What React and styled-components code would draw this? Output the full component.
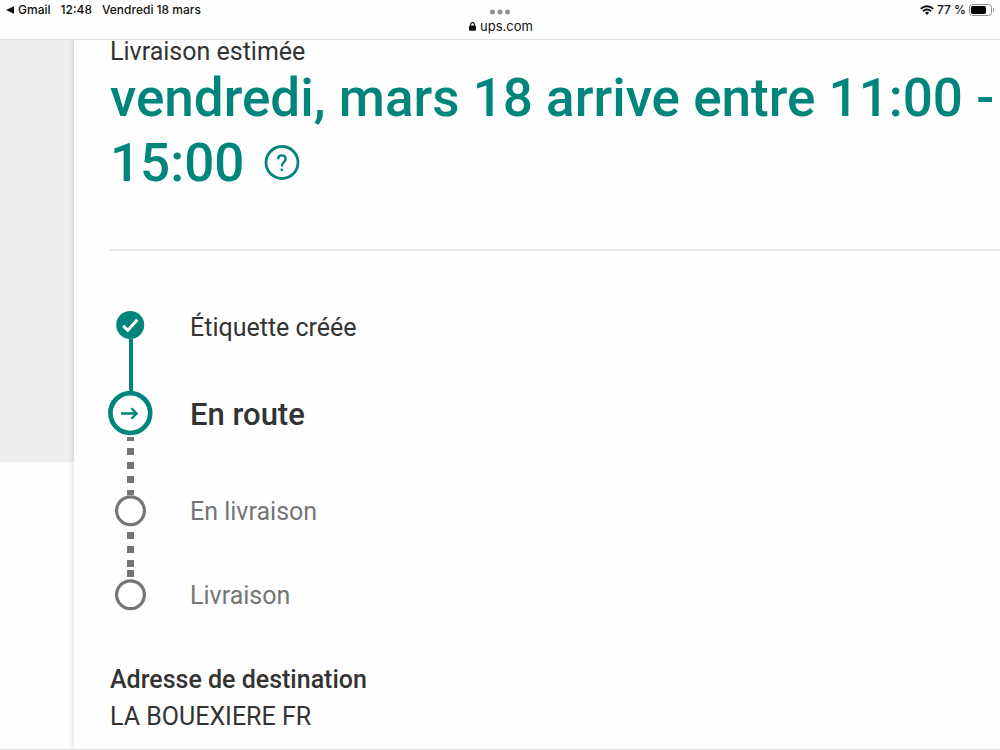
import React from "react"
import styled, { createGlobalStyle } from "styled-components"

const GlobalStyle = createGlobalStyle`
  * {
    box-sizing: border-box;
  }
  body {
    margin: 0;
    background: #fefefe;
    color: #333;
    font-family: Roboto, "Liberation Sans", sans-serif;
  }
`

const steps = [
  { label: "Étiquette créée", state: "done" },
  { label: "En route", state: "current" },
  { label: "En livraison", state: "todo" },
  { label: "Livraison", state: "todo", last: true }
]

const StepIcon = ({ state }) => {
  if (state === "done") {
    return (
      <svg width="29" height="28" viewBox="0 0 29 28" aria-hidden="true">
        <circle cx="14.2" cy="14" r="14" fill="#00857d" />
        <path d="M7.2 14.8l4.6 4.6L21.2 8.8" fill="none" stroke="#fff" strokeWidth="3" />
      </svg>
    )
  }
  if (state === "current") {
    return (
      <svg width="45" height="45" viewBox="0 0 45 45" aria-hidden="true">
        <circle cx="22.3" cy="22.1" r="19.9" fill="#fff" stroke="#00857d" strokeWidth="4.7" />
        <path d="M13 22.5h15.5M23.4 17.2l5.3 5.3-5.3 5.3" fill="none" stroke="#00857d" strokeWidth="2.3" />
      </svg>
    )
  }
  return (
    <svg width="31" height="32" viewBox="0 0 31 32" aria-hidden="true">
      <circle cx="15.5" cy="15.8" r="13.9" fill="#fff" stroke="#757575" strokeWidth="3.2" />
    </svg>
  )
}

function App() {
  return (
    <>
      <GlobalStyle />
      <Page>
        <StatusBar>
          <StatusGroup>
            <BackLink href="#gmail">
              <svg width="8" height="8" viewBox="0 0 8 8" aria-hidden="true">
                <path d="M0 4l8-3.7v7.4z" fill="#111" />
              </svg>
              Gmail
            </BackLink>
            <span>12:48</span>
            <span>Vendredi 18 mars</span>
          </StatusGroup>
          <AddressGroup>
            <svg width="20" height="6" viewBox="0 0 20 6" aria-hidden="true">
              <g fill="#929292">
                <circle cx="2.5" cy="3" r="2.5" />
                <circle cx="10" cy="3" r="2.5" />
                <circle cx="17.5" cy="3" r="2.5" />
              </g>
            </svg>
            <Address>
              <svg width="7" height="9" viewBox="0 0 7 9" aria-hidden="true">
                <rect y="3.6" width="7" height="5.2" rx="1" fill="#111" />
                <path d="M1.6 4V2.5a1.9 1.9 0 0 1 3.8 0V4" fill="none" stroke="#111" strokeWidth="1.1" />
              </svg>
              ups.com
            </Address>
          </AddressGroup>
          <BatteryGroup>
            <svg width="14" height="10" viewBox="0 0 14 10" aria-hidden="true">
              <g fill="none" stroke="#111" strokeWidth="1.9">
                <path d="M.8 3.8a8.8 8.8 0 0 1 12.4 0" />
                <path d="M3 6.2a5.7 5.7 0 0 1 8 0" />
              </g>
              <path d="M7 9.9L4.9 7.8a3 3 0 0 1 4.2 0z" fill="#111" />
            </svg>
            <span>77 %</span>
            <svg width="26" height="12" viewBox="0 0 26 12" aria-hidden="true">
              <rect x=".5" y=".5" width="22" height="11" rx="3.3" fill="#fff" stroke="#8e8e8e" />
              <rect x="2" y="2" width="15" height="8" rx="1.8" fill="#050505" />
              <path d="M24 4a2.2 2.2 0 0 1 0 4z" fill="#8e8e8e" />
            </svg>
          </BatteryGroup>
        </StatusBar>
        <Body>
          <Backdrop />
          <Card>
            <Estimate>
              <EstimateLabel>Livraison estimée</EstimateLabel>
              <EstimateTitle>
                vendredi, mars 18 arrive entre 11:00 - 15:00
                <HelpButton type="button" aria-label="Aide">
                  <svg width="36" height="36" viewBox="0 0 36 36" aria-hidden="true">
                    <g fill="none" stroke="#00857d">
                      <circle cx="18" cy="17.5" r="16" strokeWidth="2.8" />
                      <path
                        d="M14.2 14.2c0-2.4 1.5-3.8 3.7-3.8s3.7 1.3 3.7 3.5c0 3.2-3.6 3.3-3.6 6.9v.6"
                        strokeWidth="2.4"
                      />
                    </g>
                    <circle cx="17.8" cy="24.8" r="1.4" fill="#00857d" />
                  </svg>
                </HelpButton>
              </EstimateTitle>
            </Estimate>
            <Steps>
              {steps.map(({ label, state, last }) => (
                <Step key={label} $state={state} $last={last}>
                  <Marker>
                    <StepIcon state={state} />
                    {!last && <Connector $state={state} />}
                  </Marker>
                  <StepLabel $state={state}>{label}</StepLabel>
                </Step>
              ))}
            </Steps>
            <Destination>
              <DestinationTitle>Adresse de destination</DestinationTitle>
              <DestinationText>LA BOUEXIERE FR</DestinationText>
            </Destination>
          </Card>
        </Body>
      </Page>
    </>
  )
}

const Page = styled.div`
  display: flex;
  flex-direction: column;
  min-height: 100vh;
  border-bottom: 1px solid #dcdcdc;
`

const StatusBar = styled.header`
  display: grid;
  grid-template-columns: 1fr auto 1fr;
  align-items: start;
  height: 40px;
  border-bottom: 1px solid #d9d9d9;
  background: #fefefe;
  color: #111;
  font: 500 12px/20px Inter, "Liberation Sans", sans-serif;
`

const StatusGroup = styled.div`
  display: flex;
  gap: 10px;
  padding-left: 6px;
`

const BackLink = styled.a`
  display: flex;
  align-items: center;
  gap: 4px;
  color: inherit;
  text-decoration: none;
`

const AddressGroup = styled.div`
  display: flex;
  flex-direction: column;
  align-items: center;
  padding-top: 9px;
`

const Address = styled.div`
  display: flex;
  align-items: center;
  gap: 4px;
  padding-left: 2px;
  font-size: 13px;
  font-weight: 400;
  line-height: 22px;
`

const BatteryGroup = styled.div`
  display: flex;
  align-items: center;
  justify-content: flex-end;
  gap: 3px;
  padding-right: 5px;
`

const Body = styled.div`
  display: grid;
  grid-template-columns: 74px 1fr;
  flex: 1;
`

const Backdrop = styled.div`
  height: 422px;
  background: #eeeeec;
`

const Card = styled.main`
  background: #fefefe;
  box-shadow: 0 0 6px rgba(0, 0, 0, 0.16);
  clip-path: inset(0 0 0 -10px);
  padding: 0 0 12px 36px;
`

const Estimate = styled.section`
  padding-bottom: 53px;
  border-bottom: 2px solid #e6e6e6;
`

const EstimateLabel = styled.p`
  margin: 0;
  font-size: 25px;
  line-height: 24px;
`

const EstimateTitle = styled.h1`
  margin: 2px 0 0;
  color: #00857d;
  font-size: 53px;
  font-weight: 500;
  line-height: 65px;
`

const HelpButton = styled.button`
  display: inline-flex;
  margin: 0 0 0 20px;
  padding: 0;
  border: 0;
  background: none;
  cursor: pointer;
`

const Steps = styled.ol`
  margin: 60px 0 0 -2px;
  padding: 0;
  list-style: none;
`

const stepHeights = { done: 80, current: 104, todo: 84 }

const Step = styled.li`
  display: grid;
  grid-template-columns: 45px 1fr;
  gap: 37px;
  min-height: ${(p) => (p.$last ? 32 : stepHeights[p.$state])}px;
`

const Marker = styled.div`
  display: flex;
  flex-direction: column;
  align-items: center;
`

const dashes = "repeating-linear-gradient(#757575 0 7px, transparent 7px 14px)"

const Connector = styled.div`
  display: flex;
  align-items: flex-end;
  flex: 1;
  width: ${(p) => (p.$state === "done" ? 4 : 7)}px;
  background: ${(p) => (p.$state === "done" ? "#00857d" : dashes)};
  ${(p) =>
    p.$state === "current" &&
    `
    margin-top: 1px;
    background-size: 100% 14px;
    background-position: 0 -3px;
  `}
  ${(p) =>
    p.$state === "todo" &&
    `
    margin: 5px 0 2px;
    background-size: 100% 42px;
    background-repeat: no-repeat;
    &::after {
      content: "";
      width: 7px;
      height: 7px;
      background: #757575;
    }
  `}
`

const StepLabel = styled.span`
  color: ${(p) => (p.$state === "todo" ? "#757575" : "#333")};
  font-size: ${(p) => (p.$state === "current" ? 31 : 25)}px;
  font-weight: ${(p) => (p.$state === "current" ? 500 : 400)};
  line-height: ${(p) => (p.$state === "current" ? 48 : 34)}px;
`

const Destination = styled.section`
  margin-top: 48px;
  font-size: 25px;
  line-height: 37px;
`

const DestinationTitle = styled.h2`
  margin: 0;
  font-size: inherit;
  font-weight: 500;
`

const DestinationText = styled.p`
  margin: 0;
`

export default App
